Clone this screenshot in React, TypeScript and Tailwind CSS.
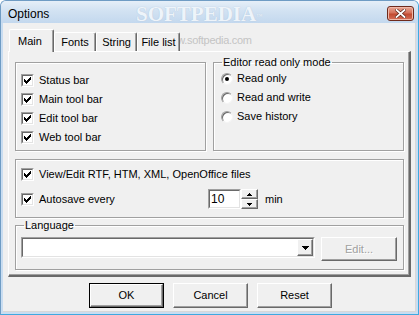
import React from "react";

const CHECK_PIXELS: [number, number][] = [
    [6, 0], [5, 1], [6, 1], [0, 2], [4, 2], [5, 2], [6, 2],
    [0, 3], [1, 3], [3, 3], [4, 3], [5, 3], [0, 4], [1, 4], [2, 4], [3, 4], [4, 4],
    [1, 5], [2, 5], [3, 5], [2, 6],
];

const CheckBox = () => (
    <span className="flex w-[13px] h-[13px] shrink-0 border border-t-[#a0a0a0] border-l-[#a0a0a0] border-r-white border-b-white">
        <span className="flex flex-1 items-center justify-center bg-white border border-t-[#696969] border-l-[#696969] border-r-[#e3e3e3] border-b-[#e3e3e3]">
            <svg width="7" height="7" viewBox="0 0 7 7" shapeRendering="crispEdges">
                {CHECK_PIXELS.map(([x, y], i) => <rect key={`px_${i}`} x={x} y={y} width="1" height="1" fill="#000" />)}
            </svg>
        </span>
    </span>
);

const Radio = ({ on }: { on?: boolean }) => (
    <span className="flex w-[12px] h-[12px] shrink-0 items-center justify-center rounded-full bg-white border border-t-[#a0a0a0] border-l-[#a0a0a0] border-r-[#f4f4f4] border-b-[#f4f4f4] shadow-[inset_1px_1px_0_#696969]">
        {on && <span className="w-[4px] h-[4px] rounded-full bg-black" />}
    </span>
);

const CheckRow = ({ label }: { label: string }) => (
    <div className="flex h-[19px] items-center gap-[5px]">
        <CheckBox />
        <span>{label}</span>
    </div>
);

const RadioRow = ({ label, on }: { label: string, on?: boolean }) => (
    <div className="flex h-[19px] items-center gap-[4px]">
        <Radio on={on} />
        <span>{label}</span>
    </div>
);

// tab widths follow the reference: Main 45, Fonts 42, String 41, File list 43
const Tab = ({ label, width, active }: { label: string, width: string, active?: boolean }) => active
    ? <div className={`relative z-10 -mb-px flex h-[23px] ${width} items-center pl-[8px] pt-[1px] bg-[#f0f0f0] rounded-t-[2px] border-t border-l border-r border-t-white border-l-white border-r-[#696969] shadow-[inset_-1px_0_0_#a0a0a0]`}>{label}</div>
    : <div className={`relative z-10 flex h-[19px] ${width} items-center justify-center pt-[1px] bg-[#f0f0f0] rounded-t-[2px] border-t border-l border-r border-t-white border-l-white border-r-[#696969] shadow-[inset_-1px_0_0_#a0a0a0]`}>{label}</div>;

const Tri = ({ up }: { up?: boolean }) => (
    <svg width="5" height="3" viewBox="0 0 5 3" shapeRendering="crispEdges">
        <path d={up ? "M2 0h1v1h1v1h1v1H0V2h1V1h1z" : "M0 0h5v1H4v1H3v1H2V2H1V1H0z"} fill="#000" />
    </svg>
);

const SpinButton = ({ up }: { up?: boolean }) => (
    <div className="flex h-[10px] items-center justify-center bg-[#f0f0f0] border border-t-white border-l-white border-r-[#696969] border-b-[#696969] shadow-[inset_-1px_-1px_0_#a0a0a0]">
        <Tri up={up} />
    </div>
);

const PushButton = ({ label, isDefault }: { label: string, isDefault?: boolean }) => (
    <div className={isDefault ? "flex w-[75px] h-[25px] border border-black" : "flex w-[75px] h-[25px]"}>
        <div className="flex flex-1 items-center justify-center bg-[#f0f0f0] border border-t-white border-l-white border-r-[#696969] border-b-[#696969] shadow-[inset_-1px_-1px_0_#a0a0a0]">{label}</div>
    </div>
);

export default function App() {
    return (
        <div className="relative w-[419px] h-[315px] flex flex-col overflow-hidden rounded-t-[6px] border border-[#6f9cc4] border-b-[#3fa9e0] border-r-[#3fa9e0] bg-[#c9ddf1] font-['Liberation_Sans',Arial,sans-serif] text-[11px] text-black">
            {/* title bar */}
            <div className="relative flex h-[22px] shrink-0 items-center justify-between pl-[7px] pr-[4px] bg-[linear-gradient(to_bottom,#e6eff8,#d2e2f2_45%,#c3d8ee)]">
                <span className="mt-[3px] text-[12px] leading-none">Options</span>
                <span className="absolute left-[135px] top-[3px] font-['Liberation_Serif',serif] font-bold text-[21px] leading-none text-[#eef4fa] [text-shadow:0_0_1px_#a9bfd6]">SOFTPEDIA<sup className="text-[6px] font-normal">™</sup></span>
                <div className="flex w-[27px] h-[15px] mt-[2px] items-center justify-center rounded-[3px] border border-[#6e2a1c] bg-[linear-gradient(to_bottom,#e9a996,#d5715a_45%,#c14a30_55%,#d6715a)] shadow-[inset_0_0_0_1px_#f0b9a9]">
                    <svg width="11" height="9" viewBox="0 0 11 9">
                        <path d="M1.5 1 L9.5 8 M9.5 1 L1.5 8" stroke="#5a2418" strokeWidth="3.2" strokeLinecap="square" />
                        <path d="M1.5 1 L9.5 8 M9.5 1 L1.5 8" stroke="#fff" strokeWidth="1.8" strokeLinecap="square" />
                    </svg>
                </div>
            </div>

            {/* client area */}
            <div className="relative flex flex-1 flex-col mx-[2px] mb-[2px] bg-[#f0f0f0] border-r border-b border-r-[#d8d8d8] border-b-[#d8d8d8]">
                {/* watermark, sits behind the tabs as in the screenshot */}
                <span className="absolute left-[159px] top-[9px] text-[11px] tracking-[-0.3px] text-[#c4c4c4]">www.softpedia.com</span>
                <div className="flex h-[22px] mt-[6px] ml-[6px] items-end">
                    <Tab label="Main" width="w-[45px]" active />
                    <Tab label="Fonts" width="w-[42px]" />
                    <Tab label="String" width="w-[41px]" />
                    <Tab label="File list" width="w-[43px]" />
                </div>

                <div className="flex w-[403px] h-[226px] ml-[5px] flex-col pl-[6px] pr-[5px] pt-[4px] border-t border-l border-r-2 border-b-2 border-t-white border-l-white border-r-[#696969] border-b-[#696969] shadow-[inset_-1px_-1px_0_#a0a0a0]">
                    <div className="grid grid-cols-[191px_191px] gap-x-[7px] items-end">
                        <div className="h-[89px] pt-[8px] pl-[5px] border border-[#a0a0a0] shadow-[inset_1px_1px_0_#fff,1px_1px_0_#fff]">
                            <CheckRow label="Status bar" />
                            <CheckRow label="Main tool bar" />
                            <CheckRow label="Edit tool bar" />
                            <CheckRow label="Web tool bar" />
                        </div>
                        <fieldset className="h-[95px] min-w-0 pl-[7px] border border-[#a0a0a0] shadow-[inset_1px_1px_0_#fff,1px_1px_0_#fff]">
                            <legend className="ml-[1px] px-[1px] leading-[13px]">Editor read only mode</legend>
                            <RadioRow label="Read only" on />
                            <RadioRow label="Read and write" />
                            <RadioRow label="Save history" />
                        </fieldset>
                    </div>

                    <div className="h-[59px] mt-[8px] pt-[5px] pl-[5px] border border-[#a0a0a0] shadow-[inset_1px_1px_0_#fff,1px_1px_0_#fff]">
                        <CheckRow label="View/Edit RTF, HTM, XML, OpenOffice files" />
                        <div className="flex h-[20px] mt-[5px] items-center">
                            <CheckBox />
                            <span className="w-[174px] pl-[5px]">Autosave every</span>
                            <div className="w-[33px] h-[20px] bg-white border border-t-[#a0a0a0] border-l-[#a0a0a0] border-r-white border-b-white">
                                <div className="flex h-full items-center pl-[1px] text-[12px] border border-t-[#696969] border-l-[#696969] border-r-[#e3e3e3] border-b-[#e3e3e3]">10</div>
                            </div>
                            <div className="flex w-[17px] h-[20px] flex-col">
                                <SpinButton up />
                                <SpinButton />
                            </div>
                            <span className="ml-[7px]">min</span>
                        </div>
                    </div>

                    <fieldset className="h-[51px] min-w-0 mt-[1px] pl-[5px] border border-[#a0a0a0] shadow-[inset_1px_1px_0_#fff,1px_1px_0_#fff]">
                        <legend className="ml-[3px] px-[1px] leading-[13px]">Language</legend>
                        <div className="flex mt-[5px] gap-[6px] items-start">
                            <div className="w-[294px] h-[21px] bg-white border border-t-[#a0a0a0] border-l-[#a0a0a0] border-r-white border-b-white">
                                <div className="flex h-full justify-end border border-t-[#696969] border-l-[#696969] border-r-[#e3e3e3] border-b-[#e3e3e3]">
                                    <div className="flex w-[16px] h-full items-center justify-center bg-[#f0f0f0] border border-t-white border-l-white border-r-[#696969] border-b-[#696969] shadow-[inset_-1px_-1px_0_#a0a0a0]">
                                        <svg width="7" height="4" viewBox="0 0 7 4" shapeRendering="crispEdges"><path d="M0 0h7v1H6v1H5v1H4v1H3V3H2V2H1V1H0z" fill="#000" /></svg>
                                    </div>
                                </div>
                            </div>
                            <div className="flex w-[76px] h-[24px] items-center justify-center bg-[#f0f0f0] text-[#a0a0a0] [text-shadow:1px_1px_0_#fff] border border-t-white border-l-white border-r-[#696969] border-b-[#696969] shadow-[inset_-1px_-1px_0_#a0a0a0]">Edit...</div>
                        </div>
                    </fieldset>
                </div>

                <div className="flex mt-[6px] ml-[86px] gap-[9px]">
                    <PushButton label="OK" isDefault />
                    <PushButton label="Cancel" />
                    <PushButton label="Reset" />
                </div>
            </div>
        </div>
    );
}
